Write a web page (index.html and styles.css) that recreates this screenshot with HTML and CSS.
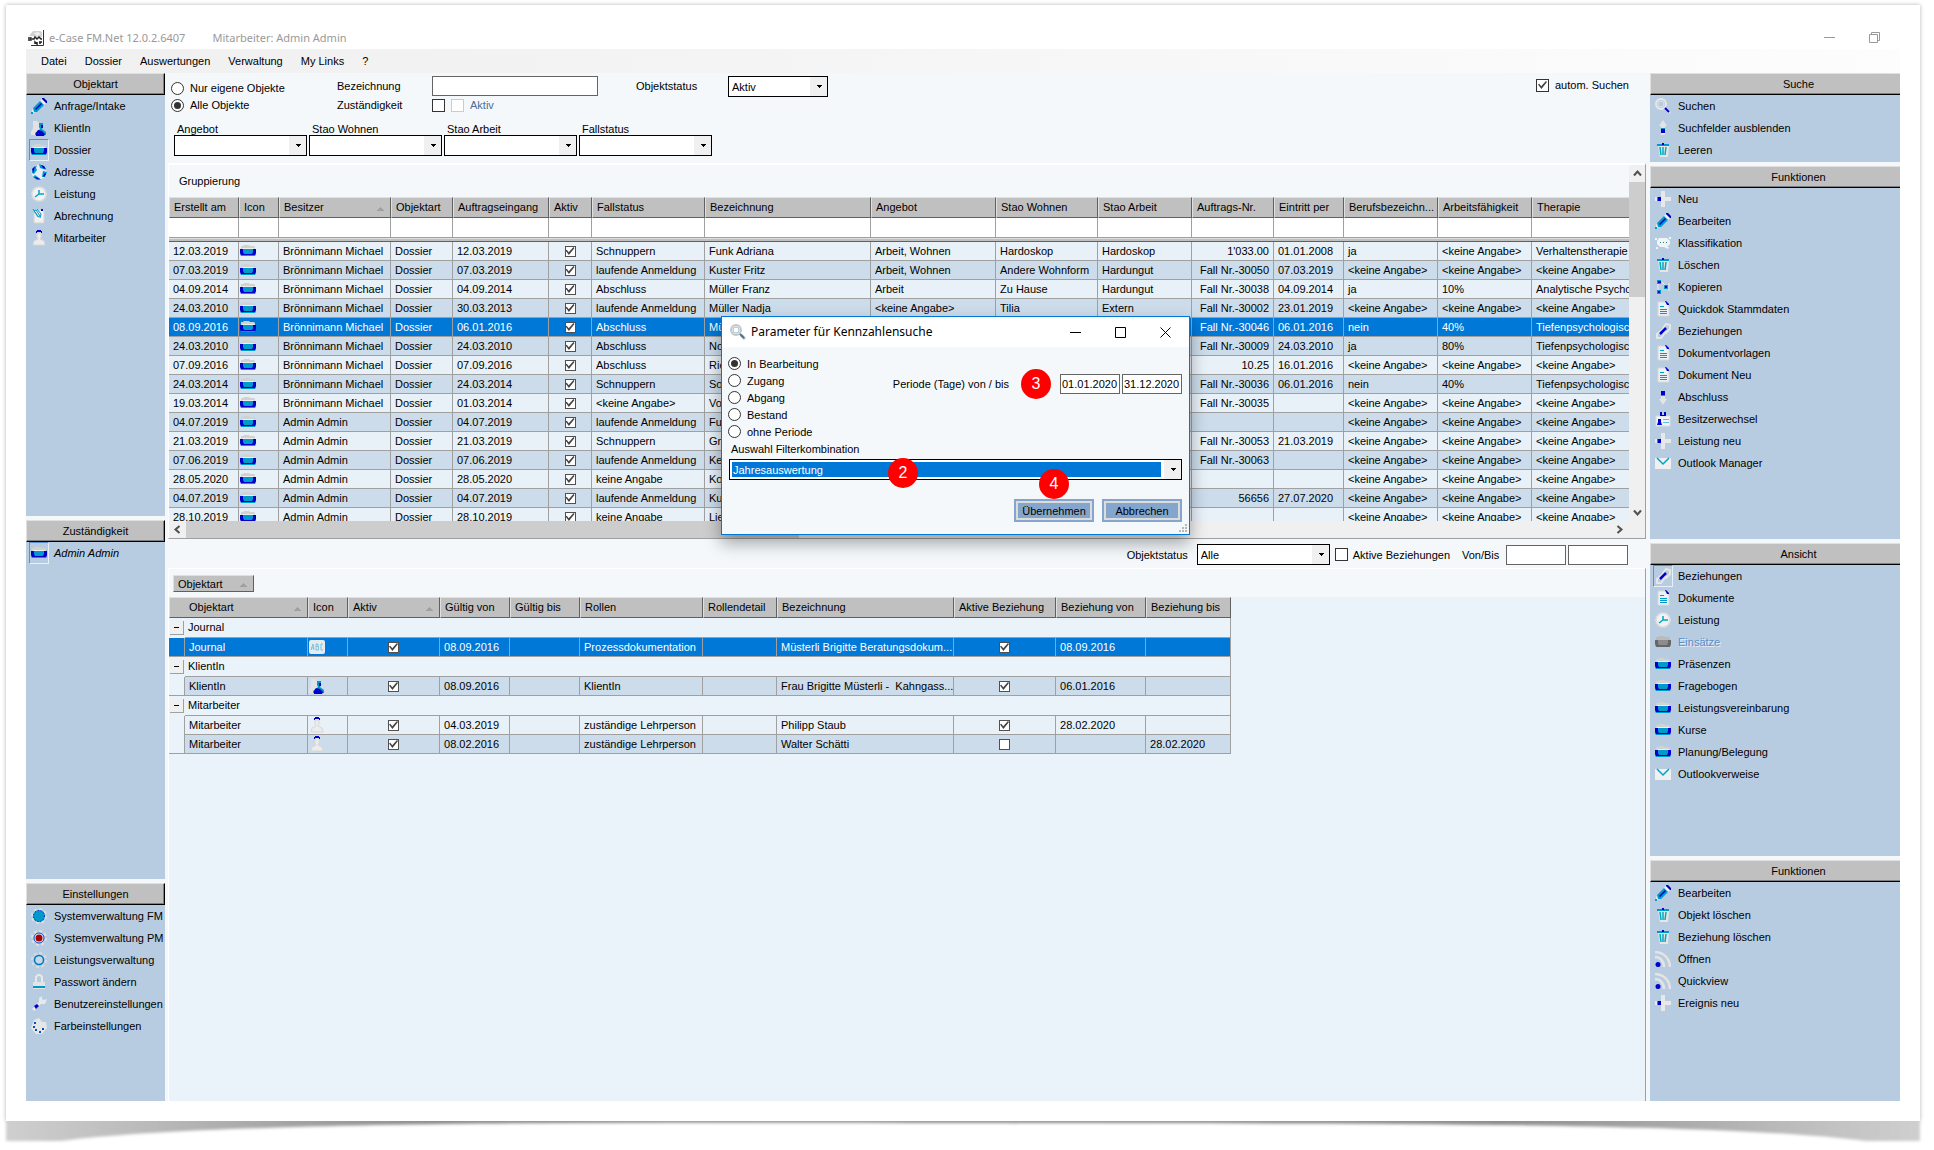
FILE: index.html
```html
<!DOCTYPE html>
<html lang="de">
<head>
<meta charset="utf-8">
<title>e-Case FM.Net</title>
<link rel="stylesheet" href="styles.css">
</head>
<body>
<svg class="defs" aria-hidden="true">
  <defs>
    <linearGradient id="curl" x1="0" x2="1" y1="0" y2="0">
      <stop offset="0" stop-color="#cfcfcf"/><stop offset=".08" stop-color="#b8b8b8"/><stop offset=".22" stop-color="#8e8e8e"/><stop offset=".5" stop-color="#989898"/><stop offset=".78" stop-color="#8e8e8e"/><stop offset=".92" stop-color="#b8b8b8"/><stop offset="1" stop-color="#cfcfcf"/>
    </linearGradient>
    <filter id="soft" x="-5%" y="-20%" width="110%" height="150%"><feGaussianBlur stdDeviation="1.5"/></filter>
  </defs>
  <symbol id="i-folder" viewBox="0 0 16 16"><path fill="#d2d2d2" d="M1 6V3h2l1-1h5l1 1h4l1 1v2z"/><path fill="#eee" d="M2 5h12v1H2z"/><path fill="#00c" d="M0 6h16v4l-1 3H1l-1-3z"/><path fill="#0099cc" d="M3 6h10v3l-1 2H4L3 9zM1 12h14v1H1z"/></symbol>
  <symbol id="i-folder-off" viewBox="0 0 16 16"><path fill="#bbb" d="M1 6V3h2l1-1h5l1 1h4l1 1v2z"/><path fill="#666" d="M0 6h16v4l-1 3H1l-1-3z"/><path fill="#8c8c8c" d="M3 6h10v3l-1 2H4L3 9z"/></symbol>
  <symbol id="i-pencil" viewBox="0 0 16 16"><path fill="#eee" d="M9 3l2-2 4 4-2 2zM2 10l2 4-2 1-1-2z"/><path fill="#0099cc" d="M2 10l7-7 4 4-7 7H3zM0 14h2v2H0z"/><path fill="#0000b8" d="M11 0h2l3 3v2h-1l-4-4zM4 11l6-6 1 1-6 6z"/></symbol>
  <symbol id="i-client" viewBox="0 0 16 16"><path fill="#e2e2e2" d="M2 1h4l2 2v4l3 4v4H0v-3l2-4z"/><path fill="#0099cc" d="M8 3h4v4l-1 2 4 3v3H4v-2l5-4-1-2z"/><path fill="#00c" d="M10 5h2v3h-2zM7 10l4 1 3 3-1 2H5v-3z"/></symbol>
  <symbol id="i-globe" viewBox="0 0 16 16"><circle cx="8" cy="8" r="7.500" fill="#e4eef4"/><path fill="#0099cc" d="M2 4l4-3-1 3 1 2-3 4-2-1zM8 0l5 2 2 4-3-1-3-1zM12 7l4 1-2 5-3 0zM4 11l4 3 2 2-4 0-4-3z"/><path fill="#00c" d="M1 5l3-3-1 4-1 3zM10 1l3 1 2 3-3-1zM14 9l1 1-2 3-1-1zM5 13l4 2-3 0-3-2z"/></symbol>
  <symbol id="i-clock" viewBox="0 0 16 16"><circle cx="8" cy="8" r="7" fill="#f2f2f2" stroke="#dcdcdc" stroke-width="2" stroke-dasharray="2 1"/><path d="M8 4v4h5M8 8l-4 3" fill="none" stroke="#00a3c8" stroke-width="1.500"/></symbol>
  <symbol id="i-clip" viewBox="0 0 16 16"><path fill="#f0f0f0" stroke="#d4d4d4" d="M3 2h10v13H3z"/><path fill="none" stroke="#0099cc" d="M2 1l5 8 2-1-4-6-2 1 4 5M6 1l4 5-1 4"/><path fill="#00c" d="M10 1h2v2h-2z"/></symbol>
  <symbol id="i-person" viewBox="0 0 16 16"><path fill="#ececec" stroke="#d8d8d8" d="M6 3h4v4l-1 2 4 2 1 4H2l1-4 4-2-1-2z"/><path fill="#00c" d="M5 3V1h1V0h4v1h1v2h-1V2H6v1z"/></symbol>
  <symbol id="i-search" viewBox="0 0 16 16"><circle cx="6" cy="6" r="5" fill="#b8cce1" stroke="#e8e8e8" stroke-width="2"/><circle cx="6" cy="6" r="3" fill="none" stroke="#d8e4e4"/><path stroke="#ddd" stroke-width="3" d="M11 11l4 4"/><path stroke="#00c" stroke-width="2" d="M10 10l4 4"/></symbol>
  <symbol id="i-lens" viewBox="0 0 16 16"><circle cx="6" cy="6" r="5" fill="#e4edf0" stroke="#c4c8ca" stroke-width="2"/><circle cx="6" cy="6" r="3" fill="#fff" stroke="#a9c6cf"/><path stroke="#bbb" stroke-width="3" d="M11 11l4 4"/><path stroke="#3a78a8" stroke-width="2" d="M10 10l4 4"/></symbol>
  <symbol id="i-up" viewBox="0 0 16 16"><path fill="#e4e4e4" d="M8 0l4 6h-2v9H6V6H4z"/><path fill="#00c" d="M6 9h4v4H6z"/><path fill="#0099cc" d="M6 8h4v1H6z"/></symbol>
  <symbol id="i-down" viewBox="0 0 16 16"><path fill="#e4e4e4" d="M8 16l4-6h-2V2H6v8H4z"/><path fill="#00c" d="M6 2h4v4H6z"/><path fill="#0099cc" d="M6 6h4v1H6z"/></symbol>
  <symbol id="i-trash" viewBox="0 0 16 16"><path fill="#e6e6e6" d="M3 4h11l-1 11H5z"/><path fill="#0099cc" d="M2 2h12v2H2z"/><path fill="#00c" d="M7 1h2v2H7z"/><path stroke="#00aac0" stroke-width="1.500" d="M5 5l1 8M8 5v8M11 5l-1 8"/></symbol>
  <symbol id="i-plus" viewBox="0 0 16 16"><path fill="#e8e8e8" d="M6 0h4v6h6v4h-6v6H6v-6H0V6h6z"/><path fill="#00c" d="M3 6h3v4H3z"/><path fill="#0099cc" d="M2 6h1v4H2z"/></symbol>
  <symbol id="i-bubble" viewBox="0 0 16 16"><path fill="#f4f4f4" d="M4 3h8l3 3v3l-3 3h2l-1 2-4-2H5L2 9V6zM0 3h2v2H0zM14 2h2v2h-2zM1 12h2v2H1z"/><path fill="#0088bb" d="M5 7h1v1H5zM8 7h1v1H8zM11 7h1v1h-1z"/></symbol>
  <symbol id="i-nodes" viewBox="0 0 16 16"><path fill="none" stroke="#eee" d="M3 4v8M7 3l3 3M14 4v8"/><path fill="#0099cc" d="M2 1h4v4H2zM9 6h4v4H9zM2 11h4v4H2z"/><path fill="#00c" d="M3 2h3v2H3zM10 7h2v2h-2zM3 12h2v2H3z"/></symbol>
  <symbol id="i-doc" viewBox="0 0 16 16"><path fill="#eaf2f6" stroke="#d8d8d8" d="M3 1h7l4 4v10H3z"/><path fill="#00c" d="M10 0h1l3 3v1h-2z"/><path stroke="#0099cc" d="M5 5.500h4M5 8.500h7M5 10.500h7M5 12.500h7"/></symbol>
  <symbol id="i-link" viewBox="0 0 16 16"><g fill="none" stroke="#e6e6e6" stroke-width="2"><path d="M8 5l3-4 4 1v4l-4 4zM7 7l-5 4v4h4l3-4z"/></g><path stroke="#00c" stroke-width="2.500" d="M5 11l6-6"/></symbol>
  <symbol id="i-badge" viewBox="0 0 16 16"><path fill="#eef4f8" stroke="#ddd" d="M1 5h14v10H1z"/><path fill="#00c" d="M5 1h2v3h2V1h2v4H5zM3 8h3v3l1 3H2l1-3z"/><path stroke="#5bc4dc" d="M8 8.500h6M8 11.500h6"/></symbol>
  <symbol id="i-mail" viewBox="0 0 16 16"><path fill="#f0f0f0" d="M0 3h16v11H0z"/><path fill="none" stroke="#00a3c8" stroke-width="1.500" d="M2 3l6 6 6-6"/></symbol>
  <symbol id="i-rss" viewBox="0 0 16 16"><path fill="none" stroke="#e4e4e4" stroke-width="2.500" d="M0 1c8 0 15 6 15 15M0 6c5 0 9 4 9 10"/><circle cx="3" cy="13.500" r="2.500" fill="#00c"/></symbol>
  <symbol id="i-gear" viewBox="0 0 16 16"><circle cx="8" cy="8" r="7" fill="none" stroke="#e0e0e0" stroke-width="2" stroke-dasharray="3 2.500"/><circle cx="8" cy="8" r="6" fill="#0099cc"/><circle cx="8" cy="8" r="5.500" fill="none" stroke="#00c" stroke-dasharray="1 2"/></symbol>
  <symbol id="i-gear-red" viewBox="0 0 16 16"><circle cx="8" cy="8" r="7" fill="none" stroke="#e0e0e0" stroke-width="2" stroke-dasharray="3 2.500"/><circle cx="8" cy="8" r="5" fill="#eef" stroke="#0050c0"/><circle cx="8" cy="8" r="3.500" fill="#a00"/></symbol>
  <symbol id="i-gear-ring" viewBox="0 0 16 16"><circle cx="8" cy="8" r="7" fill="none" stroke="#dcdcdc" stroke-width="2" stroke-dasharray="3 2.500"/><circle cx="8" cy="8" r="4.500" fill="#c4d8e8" stroke="#0078c4" stroke-width="1.500"/></symbol>
  <symbol id="i-lock" viewBox="0 0 16 16"><path fill="none" stroke="#e8e8e8" stroke-width="2" d="M5 8V3l2-2h2l2 2v5"/><path fill="#e4e4e4" d="M2 8h12v7H2z"/><path fill="#0099cc" d="M2 12h12v2H2z"/></symbol>
  <symbol id="i-wrench" viewBox="0 0 16 16"><path fill="#e8e8e8" d="M1 13l7-7V2l3-2v3l2 1 3-1-2 5H10l-7 7z"/><path fill="#00c" d="M3 10l3-2 2 2-3 3z"/></symbol>
  <symbol id="i-palette" viewBox="0 0 16 16"><path fill="#e6e6e6" d="M3 2l5-2 3 4 4 0 1 6-5 6H5L0 10z"/><path fill="#0050cc" d="M3 4h2v2H3zM2 8h2v2H2zM4 11h2v2H4zM8 13h2v2H8zM11 10h2v2h-2z"/></symbol>
  <symbol id="i-abc" viewBox="0 0 16 16"><rect y="1" width="16" height="14" rx="2" fill="#e4ecf0"/><path fill="none" stroke="#7cc0dc" d="M2 11l2-6 1 6M2 9h3M7 11V5h2v2.500H7h2.500V11zM14 5h-2v6h2"/></symbol>
  <symbol id="i-logo" viewBox="0 0 16 16"><path fill="#d0d0d0" d="M1 6l4-5h7l2 1v5z"/><path fill="#eee" d="M6 3l4-1 3 2-4 2z"/><path fill="none" stroke="#333" d="M15.500 0v15.500H3"/><path fill="none" stroke="#222" stroke-width="1.500" d="M0 8h3v2H0M4 9h2l1-2 2 2 2-2 2 2h1M7 14v-2l2 2v-2M11 12h3M12 12v2"/></symbol>
</svg>

<div class="card">
<main class="app">
  <header class="titlebar">
    <svg class="ico"><use href="#i-logo"/></svg>
    <h1>e-Case FM.Net 12.0.2.6407</h1>
    <span class="who">Mitarbeiter: Admin Admin</span>
    <button class="winbtn push" aria-label="Minimieren"><svg viewBox="0 0 11 11"><path d="M0 5.500h11"/></svg></button>
    <button class="winbtn" aria-label="Wiederherstellen"><svg viewBox="0 0 11 11"><path d="M.5 2.500h8v8h-8zM2.500 2.500v-2h8v8h-2"/></svg></button>
  </header>
  <nav class="menubar">
    <button>Datei</button><button>Dossier</button><button>Auswertungen</button><button>Verwaltung</button><button>My Links</button><button>?</button>
  </nav>

  <div class="work">
    <aside class="side left">
      <section class="panel">
        <h2>Objektart</h2>
        <button class="item"><svg class="ico"><use href="#i-pencil"/></svg>Anfrage/Intake</button>
        <button class="item"><svg class="ico"><use href="#i-client"/></svg>KlientIn</button>
        <button class="item on"><svg class="ico"><use href="#i-folder"/></svg>Dossier</button>
        <button class="item"><svg class="ico"><use href="#i-globe"/></svg>Adresse</button>
        <button class="item"><svg class="ico"><use href="#i-clock"/></svg>Leistung</button>
        <button class="item"><svg class="ico"><use href="#i-clip"/></svg>Abrechnung</button>
        <button class="item"><svg class="ico"><use href="#i-person"/></svg>Mitarbeiter</button>
      </section>
      <section class="panel">
        <h2>Zuständigkeit</h2>
        <button class="item on"><svg class="ico"><use href="#i-folder"/></svg><em>Admin Admin</em></button>
      </section>
      <section class="panel">
        <h2>Einstellungen</h2>
        <button class="item"><svg class="ico"><use href="#i-gear"/></svg>Systemverwaltung FM</button>
        <button class="item"><svg class="ico"><use href="#i-gear-red"/></svg>Systemverwaltung PM</button>
        <button class="item"><svg class="ico"><use href="#i-gear-ring"/></svg>Leistungsverwaltung</button>
        <button class="item"><svg class="ico"><use href="#i-lock"/></svg>Passwort ändern</button>
        <button class="item"><svg class="ico"><use href="#i-wrench"/></svg>Benutzereinstellungen</button>
        <button class="item"><svg class="ico"><use href="#i-palette"/></svg>Farbeinstellungen</button>
      </section>
    </aside>

    <div class="center">
      <form class="filters">
        <div class="frow">
          <div class="radios">
            <label><input type="radio" name="scope">Nur eigene Objekte</label>
            <label><input type="radio" name="scope" checked>Alle Objekte</label>
          </div>
          <div class="fields">
            <label for="bez">Bezeichnung</label><input class="text" id="bez" type="text">
            <label for="zust">Zuständigkeit</label>
            <span class="pair"><input id="zust" type="checkbox"><label class="off"><input type="checkbox" disabled>Aktiv</label></span>
          </div>
          <label class="inline" for="ostat">Objektstatus</label>
          <span class="status"><select id="ostat"><option>Aktiv</option></select></span>
          <label class="auto"><input type="checkbox" checked>autom. Suchen</label>
        </div>
        <div class="combos">
          <label>Angebot<select><option></option></select></label>
          <label>Stao Wohnen<select><option></option></select></label>
          <label>Stao Arbeit<select><option></option></select></label>
          <label>Fallstatus<select><option></option></select></label>
        </div>
      </form>

      <section class="pane">
        <div class="view">
          <p class="band">Gruppierung</p>
          <table class="grid top">
            <colgroup><col class="w70"><col class="w40"><col class="w112"><col class="w62"><col class="w96"><col class="w43"><col class="w113"><col class="w166"><col class="w125"><col class="w102"><col class="w94"><col class="w82"><col class="w70"><col class="w94"><col class="w94"><col></colgroup>
            <thead>
              <tr><th>Erstellt am</th><th>Icon</th><th class="sort">Besitzer</th><th>Objektart</th><th>Auftragseingang</th><th>Aktiv</th><th>Fallstatus</th><th>Bezeichnung</th><th>Angebot</th><th>Stao Wohnen</th><th>Stao Arbeit</th><th>Auftrags-Nr.</th><th>Eintritt per</th><th>Berufsbezeichn...</th><th>Arbeitsfähigkeit</th><th>Therapie</th></tr>
              <tr class="find"><td></td><td></td><td></td><td></td><td></td><td></td><td></td><td></td><td></td><td></td><td></td><td></td><td></td><td></td><td></td><td></td></tr>
              <tr class="rule"><td colspan="16"></td></tr>
            </thead>
            <tbody>
              <tr><td>12.03.2019</td><td class="pic"><svg class="ico"><use href="#i-folder"/></svg></td><td>Brönnimann Michael</td><td>Dossier</td><td>12.03.2019</td><td class="chk"><input type="checkbox" checked aria-label="Aktiv"></td><td>Schnuppern</td><td>Funk Adriana</td><td>Arbeit, Wohnen</td><td>Hardoskop</td><td>Hardoskop</td><td class="num">1'033.00</td><td>01.01.2008</td><td>ja</td><td>&lt;keine Angabe&gt;</td><td>Verhaltenstherapie</td></tr>
              <tr><td>07.03.2019</td><td class="pic"><svg class="ico"><use href="#i-folder"/></svg></td><td>Brönnimann Michael</td><td>Dossier</td><td>07.03.2019</td><td class="chk"><input type="checkbox" checked aria-label="Aktiv"></td><td>laufende Anmeldung</td><td>Kuster Fritz</td><td>Arbeit, Wohnen</td><td>Andere Wohnform</td><td>Hardungut</td><td class="num">Fall Nr.-30050</td><td>07.03.2019</td><td>&lt;keine Angabe&gt;</td><td>&lt;keine Angabe&gt;</td><td>&lt;keine Angabe&gt;</td></tr>
              <tr><td>04.09.2014</td><td class="pic"><svg class="ico"><use href="#i-folder"/></svg></td><td>Brönnimann Michael</td><td>Dossier</td><td>04.09.2014</td><td class="chk"><input type="checkbox" checked aria-label="Aktiv"></td><td>Abschluss</td><td>Müller Franz</td><td>Arbeit</td><td>Zu Hause</td><td>Hardungut</td><td class="num">Fall Nr.-30038</td><td>04.09.2014</td><td>ja</td><td>10%</td><td>Analytische Psycho</td></tr>
              <tr><td>24.03.2010</td><td class="pic"><svg class="ico"><use href="#i-folder"/></svg></td><td>Brönnimann Michael</td><td>Dossier</td><td>30.03.2013</td><td class="chk"><input type="checkbox" checked aria-label="Aktiv"></td><td>laufende Anmeldung</td><td>Müller Nadja</td><td>&lt;keine Angabe&gt;</td><td>Tilia</td><td>Extern</td><td class="num">Fall Nr.-30002</td><td>23.01.2019</td><td>&lt;keine Angabe&gt;</td><td>&lt;keine Angabe&gt;</td><td>&lt;keine Angabe&gt;</td></tr>
              <tr class="sel"><td>08.09.2016</td><td class="pic"><svg class="ico"><use href="#i-folder"/></svg></td><td>Brönnimann Michael</td><td>Dossier</td><td>06.01.2016</td><td class="chk"><input type="checkbox" checked aria-label="Aktiv"></td><td>Abschluss</td><td>Mü</td><td></td><td></td><td></td><td class="num">Fall Nr.-30046</td><td>06.01.2016</td><td>nein</td><td>40%</td><td>Tiefenpsychologisch</td></tr>
              <tr><td>24.03.2010</td><td class="pic"><svg class="ico"><use href="#i-folder"/></svg></td><td>Brönnimann Michael</td><td>Dossier</td><td>24.03.2010</td><td class="chk"><input type="checkbox" checked aria-label="Aktiv"></td><td>Abschluss</td><td>No</td><td></td><td></td><td></td><td class="num">Fall Nr.-30009</td><td>24.03.2010</td><td>ja</td><td>80%</td><td>Tiefenpsychologisch</td></tr>
              <tr><td>07.09.2016</td><td class="pic"><svg class="ico"><use href="#i-folder"/></svg></td><td>Brönnimann Michael</td><td>Dossier</td><td>07.09.2016</td><td class="chk"><input type="checkbox" checked aria-label="Aktiv"></td><td>Abschluss</td><td>Rie</td><td></td><td></td><td></td><td class="num">10.25</td><td>16.01.2016</td><td>&lt;keine Angabe&gt;</td><td>&lt;keine Angabe&gt;</td><td>&lt;keine Angabe&gt;</td></tr>
              <tr><td>24.03.2014</td><td class="pic"><svg class="ico"><use href="#i-folder"/></svg></td><td>Brönnimann Michael</td><td>Dossier</td><td>24.03.2014</td><td class="chk"><input type="checkbox" checked aria-label="Aktiv"></td><td>Schnuppern</td><td>So</td><td></td><td></td><td></td><td class="num">Fall Nr.-30036</td><td>06.01.2016</td><td>nein</td><td>40%</td><td>Tiefenpsychologisch</td></tr>
              <tr><td>19.03.2014</td><td class="pic"><svg class="ico"><use href="#i-folder"/></svg></td><td>Brönnimann Michael</td><td>Dossier</td><td>01.03.2014</td><td class="chk"><input type="checkbox" checked aria-label="Aktiv"></td><td>&lt;keine Angabe&gt;</td><td>Vo</td><td></td><td></td><td></td><td class="num">Fall Nr.-30035</td><td></td><td>&lt;keine Angabe&gt;</td><td>&lt;keine Angabe&gt;</td><td>&lt;keine Angabe&gt;</td></tr>
              <tr><td>04.07.2019</td><td class="pic"><svg class="ico"><use href="#i-folder"/></svg></td><td>Admin Admin</td><td>Dossier</td><td>04.07.2019</td><td class="chk"><input type="checkbox" checked aria-label="Aktiv"></td><td>laufende Anmeldung</td><td>Fu</td><td></td><td></td><td></td><td></td><td></td><td>&lt;keine Angabe&gt;</td><td>&lt;keine Angabe&gt;</td><td>&lt;keine Angabe&gt;</td></tr>
              <tr><td>21.03.2019</td><td class="pic"><svg class="ico"><use href="#i-folder"/></svg></td><td>Admin Admin</td><td>Dossier</td><td>21.03.2019</td><td class="chk"><input type="checkbox" checked aria-label="Aktiv"></td><td>Schnuppern</td><td>Gr</td><td></td><td></td><td></td><td class="num">Fall Nr.-30053</td><td>21.03.2019</td><td>&lt;keine Angabe&gt;</td><td>&lt;keine Angabe&gt;</td><td>&lt;keine Angabe&gt;</td></tr>
              <tr><td>07.06.2019</td><td class="pic"><svg class="ico"><use href="#i-folder"/></svg></td><td>Admin Admin</td><td>Dossier</td><td>07.06.2019</td><td class="chk"><input type="checkbox" checked aria-label="Aktiv"></td><td>laufende Anmeldung</td><td>Ke</td><td></td><td></td><td></td><td class="num">Fall Nr.-30063</td><td></td><td>&lt;keine Angabe&gt;</td><td>&lt;keine Angabe&gt;</td><td>&lt;keine Angabe&gt;</td></tr>
              <tr><td>28.05.2020</td><td class="pic"><svg class="ico"><use href="#i-folder"/></svg></td><td>Admin Admin</td><td>Dossier</td><td>28.05.2020</td><td class="chk"><input type="checkbox" checked aria-label="Aktiv"></td><td>keine Angabe</td><td>Ko</td><td></td><td></td><td></td><td></td><td></td><td>&lt;keine Angabe&gt;</td><td>&lt;keine Angabe&gt;</td><td>&lt;keine Angabe&gt;</td></tr>
              <tr><td>04.07.2019</td><td class="pic"><svg class="ico"><use href="#i-folder"/></svg></td><td>Admin Admin</td><td>Dossier</td><td>04.07.2019</td><td class="chk"><input type="checkbox" checked aria-label="Aktiv"></td><td>laufende Anmeldung</td><td>Ku</td><td></td><td></td><td></td><td class="num">56656</td><td>27.07.2020</td><td>&lt;keine Angabe&gt;</td><td>&lt;keine Angabe&gt;</td><td>&lt;keine Angabe&gt;</td></tr>
              <tr><td>28.10.2019</td><td class="pic"><svg class="ico"><use href="#i-folder"/></svg></td><td>Admin Admin</td><td>Dossier</td><td>28.10.2019</td><td class="chk"><input type="checkbox" checked aria-label="Aktiv"></td><td>keine Angabe</td><td>Lie</td><td></td><td></td><td></td><td></td><td></td><td>&lt;keine Angabe&gt;</td><td>&lt;keine Angabe&gt;</td><td>&lt;keine Angabe&gt;</td></tr>
            </tbody>
          </table>
        </div>
        <div class="vbar"><button aria-label="Nach oben"><svg viewBox="0 0 9 9"><path d="M1 6.500l3.500-4L8 6.500"/></svg></button><i></i><button class="end" aria-label="Nach unten"><svg viewBox="0 0 9 9"><path d="M1 2.500l3.500 4L8 2.500"/></svg></button></div>
        <div class="hbar"><button aria-label="Nach links"><svg viewBox="0 0 9 9"><path d="M6.500 1l-4 3.500 4 3.500"/></svg></button><i></i><button class="end" aria-label="Nach rechts"><svg viewBox="0 0 9 9"><path d="M2.500 1l4 3.500-4 3.500"/></svg></button></div>
      </section>

      <form class="mid">
        <label for="ost2">Objektstatus</label><select id="ost2"><option>Alle</option></select>
        <label class="akt"><input type="checkbox">Aktive Beziehungen</label>
        <label for="von">Von/Bis</label><input class="text" id="von" type="text"><input class="text" type="text" aria-label="Bis">
      </form>

      <section class="lower">
        <div class="band"><button class="chip">Objektart</button></div>
        <table class="grid rel">
          <colgroup><col class="w16"><col class="w123"><col class="w40"><col class="w92"><col class="w70"><col class="w70"><col class="w123"><col class="w74"><col class="w177"><col class="w102"><col class="w90"><col class="w85"></colgroup>
          <thead>
            <tr><th class="sort first" colspan="2">Objektart</th><th>Icon</th><th class="sort">Aktiv</th><th>Gültig von</th><th>Gültig bis</th><th>Rollen</th><th>Rollendetail</th><th>Bezeichnung</th><th>Aktive Beziehung</th><th>Beziehung von</th><th>Beziehung bis</th></tr>
          </thead>
          <tbody>
            <tr class="grp"><td><button aria-label="Journal zuklappen"></button></td><td colspan="11">Journal</td></tr>
            <tr class="sel last"><td class="ind"></td><td>Journal</td><td class="pic"><svg class="ico"><use href="#i-abc"/></svg></td><td class="chk"><input type="checkbox" checked aria-label="Aktiv"></td><td>08.09.2016</td><td></td><td>Prozessdokumentation</td><td></td><td>Müsterli Brigitte Beratungsdokum...</td><td class="chk"><input type="checkbox" checked aria-label="Aktive Beziehung"></td><td>08.09.2016</td><td></td></tr>
            <tr class="grp"><td><button aria-label="KlientIn zuklappen"></button></td><td colspan="11">KlientIn</td></tr>
            <tr class="alt last"><td class="ind"></td><td>KlientIn</td><td class="pic"><svg class="ico"><use href="#i-client"/></svg></td><td class="chk"><input type="checkbox" checked aria-label="Aktiv"></td><td>08.09.2016</td><td></td><td>KlientIn</td><td></td><td>Frau Brigitte Müsterli -&nbsp; Kahngass...</td><td class="chk"><input type="checkbox" checked aria-label="Aktive Beziehung"></td><td>06.01.2016</td><td></td></tr>
            <tr class="grp"><td><button aria-label="Mitarbeiter zuklappen"></button></td><td colspan="11">Mitarbeiter</td></tr>
            <tr><td class="ind"></td><td>Mitarbeiter</td><td class="pic"><svg class="ico"><use href="#i-person"/></svg></td><td class="chk"><input type="checkbox" checked aria-label="Aktiv"></td><td>04.03.2019</td><td></td><td>zuständige Lehrperson</td><td></td><td>Philipp Staub</td><td class="chk"><input type="checkbox" checked aria-label="Aktive Beziehung"></td><td>28.02.2020</td><td></td></tr>
            <tr class="alt last"><td class="ind"></td><td>Mitarbeiter</td><td class="pic"><svg class="ico"><use href="#i-person"/></svg></td><td class="chk"><input type="checkbox" checked aria-label="Aktiv"></td><td>08.02.2016</td><td></td><td>zuständige Lehrperson</td><td></td><td>Walter Schätti</td><td class="chk"><input type="checkbox" aria-label="Aktive Beziehung"></td><td></td><td>28.02.2020</td></tr>
          </tbody>
        </table>
      </section>
    </div>

    <aside class="side right">
      <section class="panel">
        <h2>Suche</h2>
        <button class="item"><svg class="ico"><use href="#i-search"/></svg>Suchen</button>
        <button class="item"><svg class="ico"><use href="#i-up"/></svg>Suchfelder ausblenden</button>
        <button class="item"><svg class="ico"><use href="#i-trash"/></svg>Leeren</button>
      </section>
      <section class="panel">
        <h2>Funktionen</h2>
        <button class="item"><svg class="ico"><use href="#i-plus"/></svg>Neu</button>
        <button class="item"><svg class="ico"><use href="#i-pencil"/></svg>Bearbeiten</button>
        <button class="item"><svg class="ico"><use href="#i-bubble"/></svg>Klassifikation</button>
        <button class="item"><svg class="ico"><use href="#i-trash"/></svg>Löschen</button>
        <button class="item"><svg class="ico"><use href="#i-nodes"/></svg>Kopieren</button>
        <button class="item"><svg class="ico"><use href="#i-doc"/></svg>Quickdok Stammdaten</button>
        <button class="item"><svg class="ico"><use href="#i-link"/></svg>Beziehungen</button>
        <button class="item"><svg class="ico"><use href="#i-doc"/></svg>Dokumentvorlagen</button>
        <button class="item"><svg class="ico"><use href="#i-doc"/></svg>Dokument Neu</button>
        <button class="item"><svg class="ico"><use href="#i-down"/></svg>Abschluss</button>
        <button class="item"><svg class="ico"><use href="#i-badge"/></svg>Besitzerwechsel</button>
        <button class="item"><svg class="ico"><use href="#i-plus"/></svg>Leistung neu</button>
        <button class="item"><svg class="ico"><use href="#i-mail"/></svg>Outlook Manager</button>
      </section>
      <section class="panel">
        <h2>Ansicht</h2>
        <button class="item on"><svg class="ico"><use href="#i-link"/></svg>Beziehungen</button>
        <button class="item"><svg class="ico"><use href="#i-doc"/></svg>Dokumente</button>
        <button class="item"><svg class="ico"><use href="#i-clock"/></svg>Leistung</button>
        <button class="item" disabled><svg class="ico"><use href="#i-folder-off"/></svg>Einsätze</button>
        <button class="item"><svg class="ico"><use href="#i-folder"/></svg>Präsenzen</button>
        <button class="item"><svg class="ico"><use href="#i-folder"/></svg>Fragebogen</button>
        <button class="item"><svg class="ico"><use href="#i-folder"/></svg>Leistungsvereinbarung</button>
        <button class="item"><svg class="ico"><use href="#i-folder"/></svg>Kurse</button>
        <button class="item"><svg class="ico"><use href="#i-folder"/></svg>Planung/Belegung</button>
        <button class="item"><svg class="ico"><use href="#i-mail"/></svg>Outlookverweise</button>
      </section>
      <section class="panel">
        <h2>Funktionen</h2>
        <button class="item"><svg class="ico"><use href="#i-pencil"/></svg>Bearbeiten</button>
        <button class="item"><svg class="ico"><use href="#i-trash"/></svg>Objekt löschen</button>
        <button class="item"><svg class="ico"><use href="#i-trash"/></svg>Beziehung löschen</button>
        <button class="item"><svg class="ico"><use href="#i-rss"/></svg>Öffnen</button>
        <button class="item"><svg class="ico"><use href="#i-rss"/></svg>Quickview</button>
        <button class="item"><svg class="ico"><use href="#i-plus"/></svg>Ereignis neu</button>
      </section>
    </aside>
  </div>

  <form class="dialog" role="dialog" aria-labelledby="dlg">
    <header>
      <svg class="ico"><use href="#i-lens"/></svg>
      <h2 id="dlg">Parameter für Kennzahlensuche</h2>
      <button type="button" class="winbtn push" aria-label="Minimieren"><svg viewBox="0 0 11 11"><path d="M0 5.500h11"/></svg></button>
      <button type="button" class="winbtn" aria-label="Maximieren"><svg viewBox="0 0 11 11"><path d="M.5.500h10v10H.5z"/></svg></button>
      <button type="button" class="winbtn" aria-label="Schliessen"><svg viewBox="0 0 11 11"><path d="M.5.500l10 10M10.500.500l-10 10"/></svg></button>
    </header>
    <div class="dbody">
      <div class="dtop">
        <div class="radios tight">
          <label><input type="radio" name="mode" checked>In Bearbeitung</label>
          <label><input type="radio" name="mode">Zugang</label>
          <label><input type="radio" name="mode">Abgang</label>
          <label><input type="radio" name="mode">Bestand</label>
          <label><input type="radio" name="mode">ohne Periode</label>
        </div>
        <div class="period">
          <label for="p1">Periode (Tage) von / bis</label>
          <span class="badge">3</span>
          <input class="text" id="p1" type="text" value="01.01.2020"><input class="text" type="text" value="31.12.2020" aria-label="bis">
        </div>
      </div>
      <label class="kl" for="komb">Auswahl Filterkombination</label>
      <div class="komb"><select id="komb"><option>Jahresauswertung</option></select><span class="badge two">2</span></div>
      <div class="acts">
        <span class="slot"><button type="button">Übernehmen</button><span class="badge four">4</span></span>
        <button type="button">Abbrechen</button>
      </div>
    </div>
    <svg class="grip" viewBox="0 0 8 8"><path d="M6 0h2v2H6zM6 3h2v2H6zM3 3h2v2H3zM6 6h2v2H6zM3 6h2v2H3zM0 6h2v2H0z"/></svg>
  </form>
</main>
<svg class="curl" viewBox="0 0 1914 22" preserveAspectRatio="none" aria-hidden="true"><path fill="url(#curl)" filter="url(#soft)" d="M0-4H1914V20H1860C1700-1 1250 3 957 2S214-1 54 20H0z"/></svg>
</div>
</body>
</html>
```
FILE: styles.css
```css
* { box-sizing: border-box; }
body {
  margin: 0;
  padding: 5px 14px 29px 6px;
  min-height: 100vh;
  display: flex;
  background: #fff;
  color: #000;
  font: 11px/14px "Liberation Sans", Arial, sans-serif;
}
h1, h2, p { margin: 0; font: inherit; }
button, input, select { font: inherit; color: inherit; margin: 0; border-radius: 0; }
button { border: 0; padding: 0; background: none; text-align: left; }
.defs { position: absolute; width: 0; height: 0; }
.ico { width: 16px; height: 16px; flex: none; display: block; }

.card {
  flex: 1;
  min-width: 0;
  position: relative;
  display: flex;
  padding: 20px;
  background: #fff;
  box-shadow: 0 0 4px rgba(0, 0, 0, .3);
}
.curl { position: absolute; left: 0; top: 100%; width: 100%; height: 22px; clip-path: inset(0 -4px -8px -4px); overflow: visible; }
.app { flex: 1; min-width: 0; position: relative; display: flex; flex-direction: column; }

/* title and menu */
.titlebar { height: 24px; display: flex; align-items: center; padding: 0 3px 0 2px; color: #999; font: 11px/16px "Noto Sans", "Open Sans", sans-serif; }
.titlebar h1 { margin: 0 27px 0 5px; }
.titlebar .ico { margin-top: 2px; }
.titlebar h1, .who { padding-top: 2px; }
.winbtn { width: 45px; height: 24px; display: flex; justify-content: center; align-items: center; }
.winbtn.push { margin-left: auto; }
.winbtn svg { width: 11px; height: 11px; fill: none; stroke: #000; }
.titlebar .winbtn svg { stroke: #999; }
.menubar { height: 24px; display: flex; align-items: center; gap: 18px; padding-left: 15px; background: linear-gradient(90deg, #f0f0f0, #f3f3f3 30%, #fdfdfd); }

/* work area */
.work { flex: 1; display: flex; background: #f4f8fb; }
.side { display: grid; row-gap: 4px; flex: none; }
.left { width: 139px; grid-template-rows: 443fr 359fr 218fr; }
.right { width: 250px; grid-template-rows: 89fr 373fr 313fr 241fr; }
.panel { background: #b8cce1; overflow: hidden; }
.panel h2 {
  height: 22px;
  text-align: center;
  line-height: 20px;
  background: #c0c0c0;
  border: 1px solid;
  border-color: #e0e0e0 #000 #000 #e0e0e0;
  box-shadow: inset -1px -1px #808080;
}
.right .panel h2 { border-right: 0; padding-left: 46px; box-shadow: inset 0 -1px #808080; }
.item { display: flex; align-items: center; width: 100%; height: 22px; padding-left: 3px; }
.item .ico { box-sizing: content-box; padding: 2px 1px; border: 1px solid transparent; margin-right: 5px; }
.item.on .ico { border-color: #5b8fc7 #e8f0f8 #e8f0f8 #5b8fc7; }
.item:disabled { color: #5b8fc7; text-shadow: 1px 1px #e8f0f8; }
.center { flex: 1; min-width: 0; display: flex; flex-direction: column; padding: 0 4px 0 3px; }

/* form controls */
.text { height: 20px; border: 1px solid #646464; background: #fff; padding: 0 1px; min-width: 0; }
select {
  appearance: none;
  height: 21px;
  padding: 0 18px 0 3px;
  border: 1px solid #000;
  background:
    linear-gradient(#000, #000) right 5px top 8px / 5px 1px no-repeat,
    linear-gradient(#000, #000) right 6px top 9px / 3px 1px no-repeat,
    linear-gradient(#000, #000) right 7px top 10px / 1px 1px no-repeat,
    linear-gradient(#f0f0f0, #f0f0f0) right / 17px 100% no-repeat,
    #fff;
}
input[type=checkbox], input[type=radio] { appearance: none; flex: none; display: grid; place-items: center; width: 13px; height: 13px; border: 1px solid #333; background: #fff; }
input[type=checkbox]:checked::before { content: ""; width: 9px; height: 8px; background: #444; clip-path: polygon(0 45%, 14% 35%, 36% 65%, 88% 0, 100% 12%, 38% 100%); }
input[type=checkbox]:disabled { border-color: #ccc; }
input[type=radio] { border-radius: 50%; }
input[type=radio]:checked::before { content: ""; width: 7px; height: 7px; border-radius: 50%; background: #333; }

/* search filters */
.filters { height: 90px; flex: none; padding: 3px 17px 0 3px; }
.frow { display: flex; align-items: flex-start; }
.radios { display: grid; gap: 3px; padding-top: 5px; width: 166px; }
.radios label { display: flex; align-items: center; gap: 6px; }
.fields { display: grid; grid-template-columns: 95px 166px; row-gap: 2px; align-items: center; }
.pair, .off { display: flex; align-items: center; gap: 6px; }
.off { color: #4a6e96; }
.inline { margin-left: 38px; padding-top: 3px; width: 92px; }
.status select { width: 100px; display: block; }
.auto { margin-left: auto; display: flex; align-items: center; gap: 6px; padding-top: 2px; }
.combos { display: flex; gap: 2px; padding: 11px 0 0 3px; }
.combos label { width: 133px; line-height: 12px; text-indent: 3px; }
.combos select { display: block; width: 100%; }

/* scrolling object grid */
.pane {
  flex: none;
  height: 376px;
  display: grid;
  grid-template: minmax(0, 1fr) 17px / minmax(0, 1fr) 16px;
  border: solid #a0a0a0;
  border-width: 2px 1px 1px 1px;
  border-top-color: #fff;
  border-left-color: #fff;
}
.view { overflow: hidden; }
.pane .band { height: 32px; line-height: 32px; padding-left: 10px; }
.vbar, .hbar { display: flex; background: #f0f0f0; }
.vbar { flex-direction: column; }
.vbar button, .hbar button { display: grid; place-items: center; width: 17px; height: 17px; }
.vbar svg, .hbar svg { width: 9px; height: 9px; fill: none; stroke: #505050; stroke-width: 2; }
.vbar i { height: 115px; background: #cdcdcd; }
.hbar { grid-column: 1 / -1; padding-right: 17px; }
.hbar i { width: 42%; background: #cdcdcd; }
.vbar .end { margin-top: auto; }
.hbar .end { margin-left: auto; }

.grid { border-collapse: separate; border-spacing: 0; table-layout: fixed; }
.grid.top { width: 100%; }
.grid.rel { width: 1062px; }
.grid th, .grid td { padding: 0 0 0 4px; overflow: hidden; white-space: nowrap; text-align: left; font-weight: normal; line-height: 17px; }
.grid th { height: 21px; padding-left: 4px; background: #c0c0c0; border: 1px solid; border-color: #e0e0e0 #606060 #606060 #e0e0e0; }
.grid td { height: 19px; border: solid #a0a0a0; border-width: 0 1px 1px 0; background: #e8f0f8; }
.top th:last-child, .top td:last-child { border-right: 0; }
.grid .find td { height: 20px; background: #fff; }
.grid .rule td { height: 4px; line-height: 0; background: #c0c0c0; border-bottom-color: #606060; border-top: 1px solid #e0e0e0; }
.top tbody tr:nth-child(even) td, .grid .alt td { background: #ccdcea; }
.grid tbody .sel td { background: #0078d7; color: #fff; }
.grid .pic { padding-left: 1px; }
.grid .num { text-align: right; padding-right: 4px; }
.grid .chk { padding: 0; }
.chk input[type=checkbox] { width: 11px; height: 11px; margin: 0 auto; border-color: #505050; }
.grid th.sort, .chip {
  background:
    linear-gradient(#a0a0a0, #a0a0a0) right 9px top 9px / 1px 1px no-repeat,
    linear-gradient(#a0a0a0, #a0a0a0) right 8px top 10px / 3px 1px no-repeat,
    linear-gradient(#a0a0a0, #a0a0a0) right 7px top 11px / 5px 1px no-repeat,
    linear-gradient(#a0a0a0, #a0a0a0) right 6px top 12px / 7px 1px no-repeat,
    #c0c0c0;
}
.w16 { width: 16px; } .w40 { width: 40px; } .w43 { width: 43px; } .w62 { width: 62px; }
.w70 { width: 70px; } .w74 { width: 74px; } .w82 { width: 82px; } .w85 { width: 85px; }
.w90 { width: 90px; } .w92 { width: 92px; } .w94 { width: 94px; } .w96 { width: 96px; }
.w102 { width: 102px; } .w112 { width: 112px; } .w113 { width: 113px; } .w123 { width: 123px; }
.w125 { width: 125px; } .w166 { width: 166px; } .w177 { width: 177px; }

/* relation filter and grid */
.mid { height: 29px; flex: none; display: flex; align-items: center; justify-content: flex-end; padding: 2px 18px 0 0; }
.mid select { width: 133px; margin: 0 5px 0 9px; }
.mid .text { width: 60px; margin-left: 2px; }
.akt { display: flex; align-items: center; gap: 5px; margin-right: 12px; }
.mid label[for=von] { width: 42px; }
.lower { flex: 1; border: solid; border-width: 1px 1px 0 1px; border-color: #fff #a0a0a0 #fff #fff; background: #eaf2fa; }
.lower .band { height: 28px; background: #f4f8fb; padding: 6px 0 0 4px; }
.chip { display: block; width: 81px; height: 17px; padding-left: 4px; border: 1px solid; border-color: #e0e0e0 #606060 #606060 #e0e0e0; background-position: right 9px top 7px, right 8px top 8px, right 7px top 9px, right 6px top 10px, 0 0; }
.grid th.first { padding-left: 19px; }
.grid .grp td { height: 20px; background: #eaf2fa; padding-left: 3px; }
.grid .grp td:first-child { border: 0; padding: 0 0 0 1px; }
.grid tbody .ind { background: #eaf2fa; border-bottom: 0; }
.grid .last .ind { border-bottom: 1px solid #a0a0a0; }
.grp button { display: block; width: 14px; height: 14px; border: solid #a0a0a0; border-width: 0 1px 1px 0; background: linear-gradient(#000, #000) 4px 6px / 5px 1px no-repeat, #f0f0f0; }

/* search parameter window */
.dialog {
  position: absolute;
  left: 695px;
  top: 291px;
  width: 469px;
  border: 1px solid #0078d7;
  background: #f4f8fb;
  box-shadow: 0 8px 16px rgba(0, 0, 0, .35);
}
.dialog header { display: flex; height: 30px; padding: 0 1px 0 8px; background: #fff; align-items: center; }
.dialog header h2 { margin-left: 5px; font: 11px/16px "Noto Sans", "Open Sans", sans-serif; }
.dialog header h2 { font-size: 12px; }
.dbody { padding: 9px 7px 12px; }
.dtop { display: flex; justify-content: space-between; }
.radios.tight { gap: 2px; padding: 0; width: 150px; }
.radios.tight label { height: 15px; margin-left: -1px; }
.period { display: flex; padding-top: 11px; align-items: center; height: 45px; gap: 2px; white-space: nowrap; }
.period .text { width: 60px; }
.period .badge { margin: 0 7px 0 10px; }
.badge { flex: none; width: 30px; height: 30px; border-radius: 50%; background: #f00; color: #fff; text-align: center; font-size: 16px; line-height: 30px; }
.badge.two { position: absolute; left: 159px; top: -1px; }
.badge.four { position: absolute; left: 25px; top: -30px; }
.kl { display: block; margin: 3px 0 3px 2px; }
.komb, .slot { position: relative; }
.komb select {
  display: block;
  width: 100%;
  color: #fff;
  background:
    linear-gradient(#000, #000) right 5px top 8px / 5px 1px no-repeat,
    linear-gradient(#000, #000) right 6px top 9px / 3px 1px no-repeat,
    linear-gradient(#000, #000) right 7px top 10px / 1px 1px no-repeat,
    linear-gradient(#f0f0f0, #f0f0f0) right / 17px 100% no-repeat,
    linear-gradient(90deg, #0078d7, #0078d7) 2px 2px / calc(100% - 22px) 15px no-repeat,
    #fff;
}
.acts { display: flex; justify-content: flex-end; gap: 8px; padding-top: 19px; }
.acts button { display: block; width: 80px; height: 23px; text-align: center; background: #85a6cc; border: 1px solid #85a6cc; outline: 2px solid #dcdcdc; outline-offset: -4px; }
.grip { position: absolute; right: 2px; bottom: 2px; width: 8px; height: 8px; fill: #b8b8b8; }
```
